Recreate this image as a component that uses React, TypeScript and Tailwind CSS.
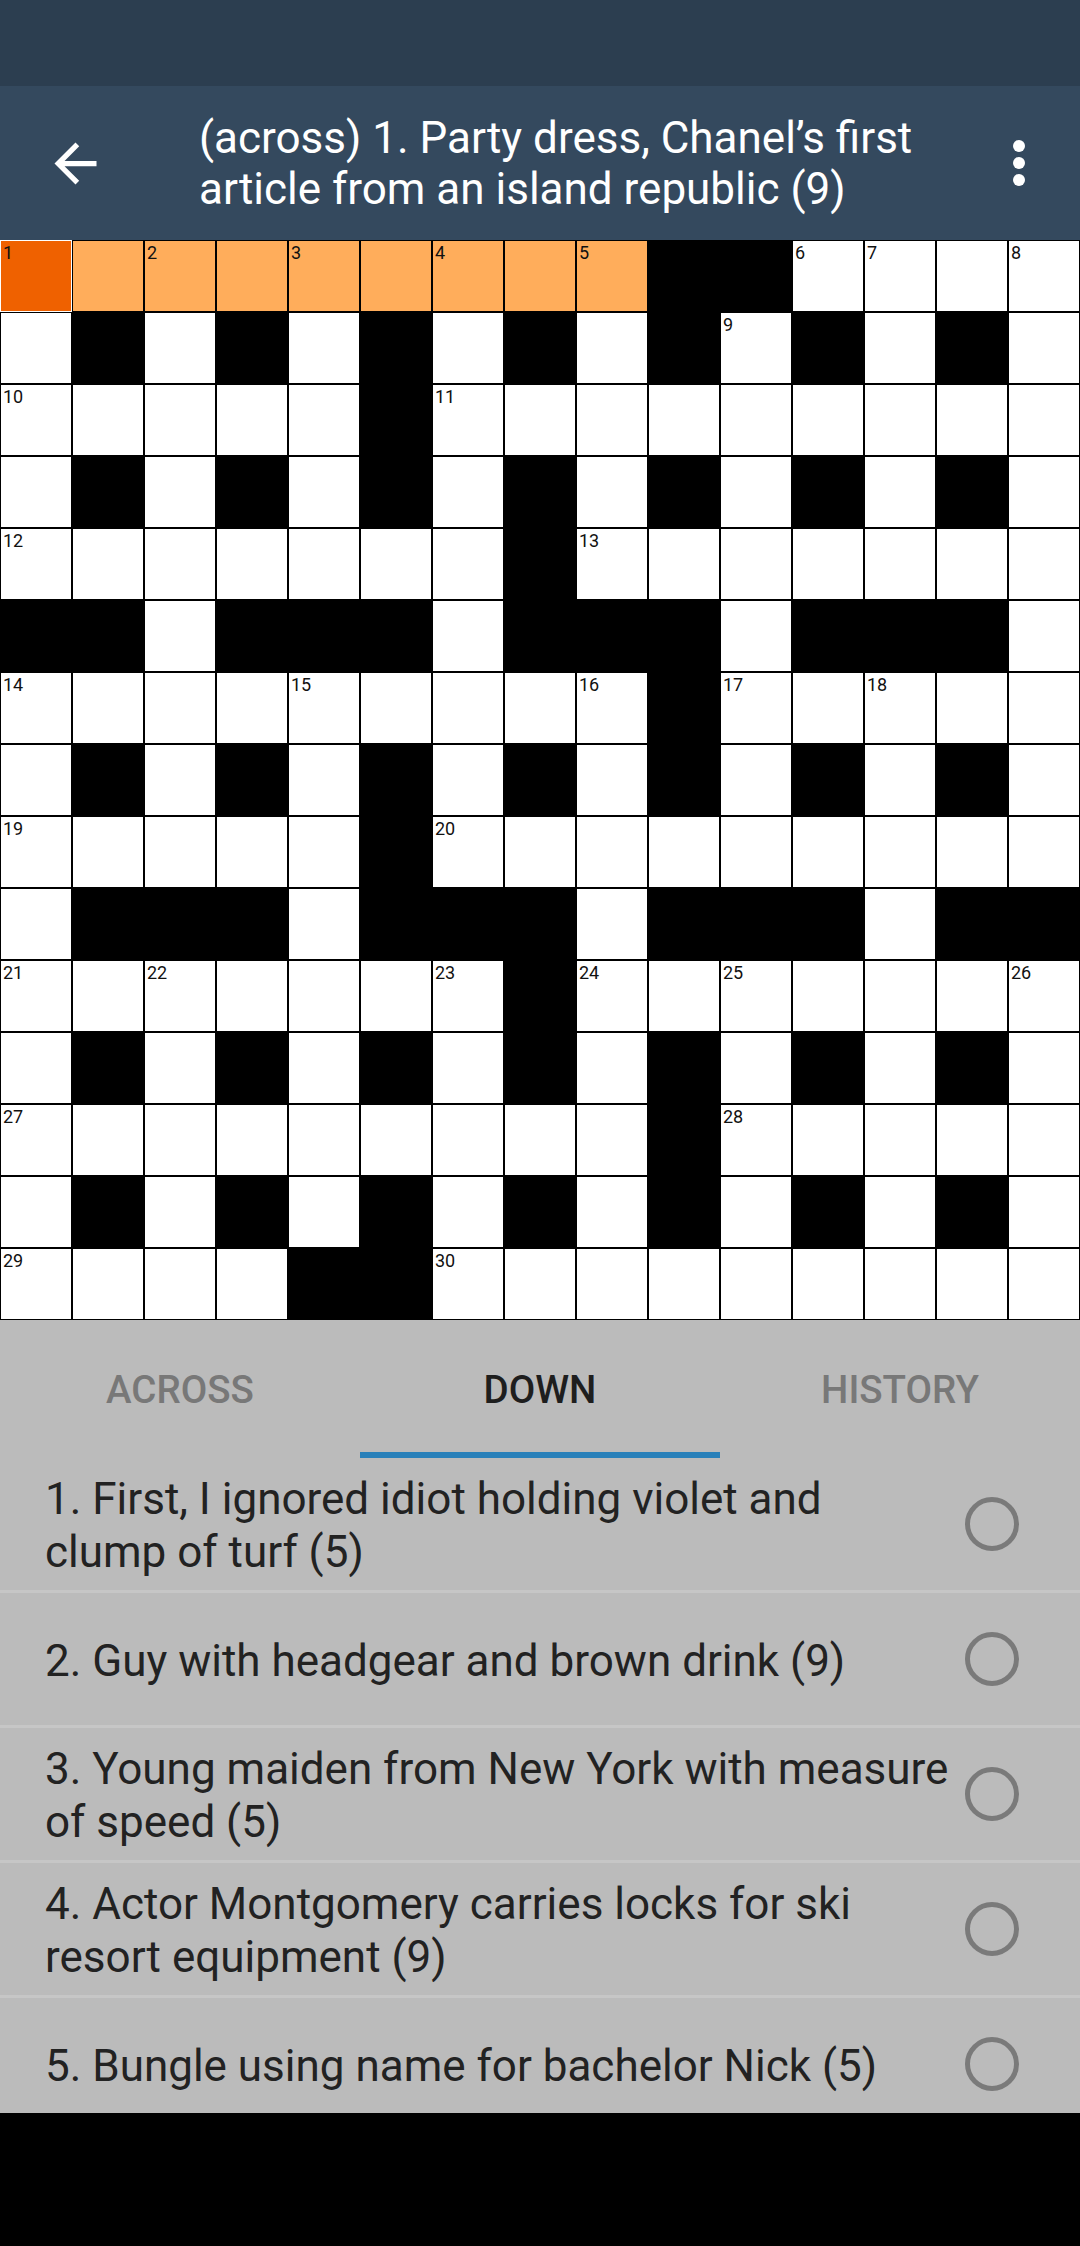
import React from "react";

const ROWS = [
  ".........##....",
  ".#.#.#.#.#.#.#.",
  ".....#.........",
  ".#.#.#.#.#.#.#.",
  ".......#.......",
  "##.###.###.###.",
  ".........#.....",
  ".#.#.#.#.#.#.#.",
  ".....#.........",
  ".###.###.###.##",
  ".......#.......",
  ".#.#.#.#.#.#.#.",
  ".........#.....",
  ".#.#.#.#.#.#.#.",
  "....##.........",
];

type Cell = { black: boolean; num?: number; hl: boolean; sel: boolean };

function buildGrid(): Cell[][] {
  const isW = (r: number, c: number) =>
    r >= 0 && r < 15 && c >= 0 && c < 15 && ROWS[r][c] === ".";
  let n = 0;
  return ROWS.map((row, r) =>
    row.split("").map((ch, c) => {
      const black = ch === "#";
      let num: number | undefined;
      if (!black) {
        const across = !isW(r, c - 1) && isW(r, c + 1);
        const down = !isW(r - 1, c) && isW(r + 1, c);
        if (across || down) {
          n += 1;
          num = n;
        }
      }
      return { black, num, hl: r === 0 && c <= 8, sel: r === 0 && c === 0 };
    })
  );
}

const CLUES = [
  "1. First, I ignored idiot holding violet and clump of turf (5)",
  "2. Guy with headgear and brown drink (9)",
  "3. Young maiden from New York with measure of speed (5)",
  "4. Actor Montgomery carries locks for ski resort equipment (9)",
  "5. Bungle using name for bachelor Nick (5)",
  "6. Company with work on the beach (5)",
];

function GridCell({ cell }: { cell: Cell }) {
  if (cell.black) {
    return <div className="w-[72px] h-[72px] bg-black" />;
  }
  const bg = cell.sel
    ? "bg-[#EF6100] border-white"
    : cell.hl
    ? "bg-[#FFAD5B] border-black"
    : "bg-white border-black";
  return (
    <div className={`w-[72px] h-[72px] border ${bg} pl-[2px] pt-[3px]`}>
      {cell.num !== undefined && (
        <div className="text-[18px] leading-[18px] text-[#111] font-['Roboto',sans-serif]">
          {cell.num}
        </div>
      )}
    </div>
  );
}

export default function App() {
  const grid = buildGrid();
  return (
    <div className="w-[1080px] h-[2246px] flex flex-col overflow-hidden bg-black font-['Roboto',sans-serif]">
      <div className="h-[86px] shrink-0 bg-[#2C3E50]" />
      <header className="h-[154px] shrink-0 bg-[#34495E] flex items-center">
        <div className="w-[199px] h-full flex items-center pl-[44px]">
          <svg width="63" height="63" viewBox="0 0 24 24" fill="#ffffff">
            <path d="M20 11H7.83l5.59-5.59L12 4l-8 8 8 8 1.41-1.41L7.83 13H20v-2z" />
          </svg>
        </div>
        <div className="w-[771px] text-white text-[44px] leading-[51px] pt-[2px]">
          (across) 1. Party dress, Chanel’s first article from an island republic (9)
        </div>
        <div className="flex-1 h-full flex items-center pl-[37px]">
          <svg width="24" height="46" viewBox="0 0 24 46" fill="#ffffff">
            <circle cx="12" cy="6" r="6" />
            <circle cx="12" cy="23" r="6" />
            <circle cx="12" cy="40" r="6" />
          </svg>
        </div>
      </header>
      <div className="shrink-0 grid grid-cols-[repeat(15,72px)] bg-white">
        {grid.map((row, r) =>
          row.map((cell, c) => <GridCell key={`${r}-${c}`} cell={cell} />)
        )}
      </div>
      <div className="shrink-0 h-[138px] bg-[#BBBBBB] grid grid-cols-3">
        <div className="flex flex-col">
          <div className="flex-1 flex items-center justify-center pt-[8px] text-[38.5px] font-medium text-[#787878]">
            ACROSS
          </div>
          <div className="h-[6px]" />
        </div>
        <div className="flex flex-col">
          <div className="flex-1 flex items-center justify-center pt-[8px] text-[38.5px] font-medium text-[#1E1E1E]">
            DOWN
          </div>
          <div className="h-[6px] bg-[#2980B9]" />
        </div>
        <div className="flex flex-col">
          <div className="flex-1 flex items-center justify-center pt-[8px] text-[38.5px] font-medium text-[#787878]">
            HISTORY
          </div>
          <div className="h-[6px]" />
        </div>
      </div>
      <div className="flex-1 overflow-hidden bg-[#BBBBBB]">
        {CLUES.map((clue) => (
          <div
            key={clue}
            className="h-[135px] border-b-[3px] border-[#C6C6C6] flex items-center pl-[45px]"
          >
            <div className="w-[904px] shrink-0 pt-[4px] text-[44px] leading-[53px] text-[#222222]">
              {clue}
            </div>
            <div className="ml-[16px] w-[54px] h-[54px] shrink-0">
              <svg width="54" height="54" viewBox="0 0 54 54">
                <circle cx="27" cy="27" r="24.5" fill="none" stroke="#7A7A7A" strokeWidth="5" />
              </svg>
            </div>
          </div>
        ))}
      </div>
      <div className="h-[133px] shrink-0 bg-black" />
    </div>
  );
}
